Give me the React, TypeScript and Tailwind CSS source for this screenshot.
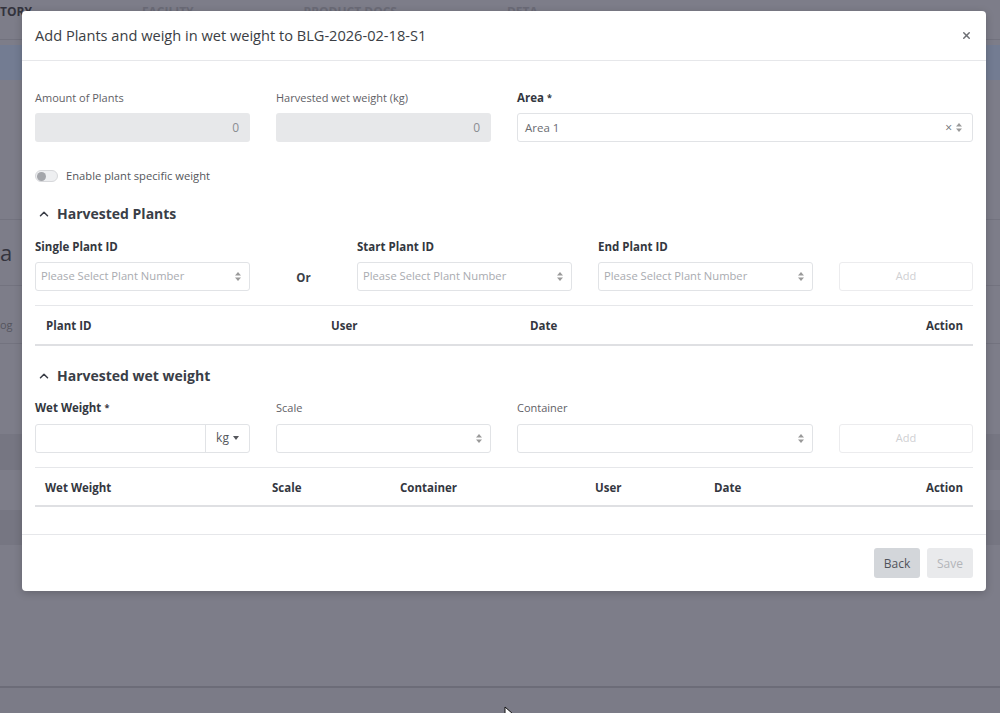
import { ChevronUp, X } from 'lucide-react'

function UpDown() {
    return (
        <svg width="6" height="9" viewBox="0 0 6 9" className="shrink-0">
            <path d="M3 0 L6 3.5 L0 3.5 Z" fill="#9a9a9a" />
            <path d="M3 9 L6 5.5 L0 5.5 Z" fill="#9a9a9a" />
        </svg>
    )
}

function Label({ children, bold, req }: { children: React.ReactNode; bold?: boolean; req?: boolean }) {
    return (
        <div className={`h-[16px] leading-[16px] ${bold ? 'text-[11.5px] font-bold text-[#333740]' : 'text-[11px] text-[#5f6166]'}`}>
            {children}
            {req && <span className="ml-[3px] text-[9px] align-top">*</span>}
        </div>
    )
}

function SelectBox({ placeholder, className = '' }: { placeholder?: string; className?: string }) {
    return (
        <div className={`flex h-[29px] items-center justify-between rounded-[3px] border border-[#e1e3e6] bg-white pl-[5px] pr-[8px] ${className}`}>
            <span className="text-[11.2px] text-[#a9abb0]">{placeholder}</span>
            <UpDown />
        </div>
    )
}

function AddButton() {
    return (
        <div className="flex h-[29px] items-center justify-center rounded-[3px] border border-[#ececee] bg-white text-[11px] text-[#cfd0d3]">
            Add
        </div>
    )
}

function Section({ title }: { title: string }) {
    return (
        <div className="flex h-[20px] items-center gap-[6px] text-[#3a3e47]">
            <ChevronUp size={14} strokeWidth={2.6} className="ml-[2px]" />
            <span className="text-[14px] font-bold leading-[20px]">{title}</span>
        </div>
    )
}

export default function App() {
    return (
        <div className="relative h-[713px] w-[1000px] overflow-hidden bg-[#7d7d89] font-['Open_Sans',sans-serif]">

            {/* Page behind the dialog */}
            <div className="flex flex-col">
                <nav className="flex h-[40px] items-start gap-[110px] border-b border-[#72727e] pt-[3px] text-[12px] font-bold uppercase">
                    <span className="text-[#33333d]">Tory</span>
                    <span className="text-[#6b6b77]">Facility</span>
                    <span className="text-[#6b6b77]">Product Docs</span>
                    <span className="text-[#6b6b77]">Deta</span>
                </nav>
                <div className="mt-[5px] h-[35px] bg-[#737c92]" />
                <div className="h-[140px] border-b border-[#73737f]" />
                <div className="flex h-[66px] items-center border-b border-[#73737f] text-[22px] text-[#34343e]">a</div>
                <div className="h-[58px] border-b border-[#73737f] pt-[33px] text-[11px] leading-[12px] text-[#55555f]">og</div>
                <div className="h-[91px] border-b border-[#767682]" />
                <div className="h-[35px] bg-[#767682]" />
                <div className="h-[40px]" />
                <div className="h-[35px] bg-[#767682]" />
                <div className="h-[143px] border-b-2 border-[#6c6c78]" />
                <div className="h-[25px] bg-[#7b7b87]" />
            </div>

            {/* Mouse cursor */}
            <svg width="10" height="14" viewBox="0 0 10 14" className="absolute left-[504px] top-[706px]">
                <path d="M1 1 L1 12 L4 9 L6 13 L8 12 L6 8 L9 8 Z" fill="#fff" stroke="#111" strokeWidth="1" />
            </svg>

            {/* Dialog */}
            <div className="absolute inset-0 pl-[22px] pt-[11px]">
                <div className="flex h-[580px] w-[964px] flex-col rounded-[4px] bg-white shadow-[0_2px_8px_rgba(0,0,0,0.2)]">

                    {/* Header */}
                    <div className="flex h-[50px] shrink-0 items-center justify-between border-b border-[#e6e7ea] pl-[13px] pr-[14px]">
                        <h2 className="text-[14.6px] text-[#3b3e44]">Add Plants and weigh in wet weight to BLG-2026-02-18-S1</h2>
                        <X size={11} strokeWidth={3.2} className="text-[#6d6f74]" />
                    </div>

                    {/* Body */}
                    <div className="flex flex-1 flex-col px-[13px] pt-[29px]">

                        <div className="grid grid-cols-[215px_215px_1fr] gap-x-[26px]">
                            <div>
                                <Label>Amount of Plants</Label>
                                <div className="mt-[7px] flex h-[29px] items-center justify-end rounded-[3px] bg-[#e7e8ea] pr-[11px] text-[12px] text-[#8b8d92]">0</div>
                            </div>
                            <div>
                                <Label>Harvested wet weight (kg)</Label>
                                <div className="mt-[7px] flex h-[29px] items-center justify-end rounded-[3px] bg-[#e7e8ea] pr-[11px] text-[12px] text-[#8b8d92]">0</div>
                            </div>
                            <div>
                                <Label bold req>Area</Label>
                                <div className="mt-[7px] flex h-[29px] items-center justify-between rounded-[3px] border border-[#e1e3e6] bg-white pl-[7px] pr-[10px]">
                                    <span className="text-[11.5px] text-[#6a6c71]">Area 1</span>
                                    <div className="flex items-center gap-[4px]">
                                        <span className="text-[12px] leading-none text-[#6d6f74]">×</span>
                                        <UpDown />
                                    </div>
                                </div>
                            </div>
                        </div>

                        {/* Toggle */}
                        <div className="mt-[28px] flex h-[12px] items-center gap-[8px]">
                            <div className="flex h-[12px] w-[23px] items-center rounded-full border border-[#d7d8db] bg-[#eeeff1] px-[1px]">
                                <div className="h-[9px] w-[9px] rounded-full bg-[#a4a6ab]" />
                            </div>
                            <span className="text-[11.2px] text-[#55575c]">Enable plant specific weight</span>
                        </div>

                        {/* Harvested Plants */}
                        <div className="mt-[22px]">
                            <Section title="Harvested Plants" />
                        </div>

                        <div className="mt-[15px] grid grid-cols-[215px_107px_215px_215px_1fr]">
                            <div>
                                <Label bold>Single Plant ID</Label>
                                <SelectBox className="mt-[7px]" placeholder="Please Select Plant Number" />
                            </div>
                            <div className="flex items-end justify-center pb-[5px]">
                                <span className="text-[11.5px] font-bold text-[#3a3e47]">Or</span>
                            </div>
                            <div>
                                <Label bold>Start Plant ID</Label>
                                <SelectBox className="mt-[7px]" placeholder="Please Select Plant Number" />
                            </div>
                            <div className="ml-[26px] w-[215px]">
                                <Label bold>End Plant ID</Label>
                                <SelectBox className="mt-[7px]" placeholder="Please Select Plant Number" />
                            </div>
                            <div className="ml-[52px]">
                                <div className="h-[16px]" />
                                <div className="mt-[7px]"><AddButton /></div>
                            </div>
                        </div>

                        <table className="mt-[14px] w-full table-fixed border-t border-[#e6e7ea] text-[11.5px] text-[#34373f]">
                            <colgroup>
                                <col className="w-[296px]" />
                                <col className="w-[199px]" />
                                <col />
                                <col className="w-[120px]" />
                            </colgroup>
                            <thead>
                                <tr className="h-[39px] border-b-2 border-[#dfe0e3]">
                                    <th className="pl-[11px] pt-[2px] text-left font-bold">Plant ID</th>
                                    <th className="pt-[2px] text-left font-bold">User</th>
                                    <th className="pt-[2px] text-left font-bold">Date</th>
                                    <th className="pr-[10px] pt-[2px] text-right font-bold">Action</th>
                                </tr>
                            </thead>
                        </table>

                        {/* Harvested wet weight */}
                        <div className="mt-[20px]">
                            <Section title="Harvested wet weight" />
                        </div>

                        <div className="mt-[14px] grid grid-cols-[215px_215px_296px_1fr] gap-x-[26px]">
                            <div>
                                <Label bold req>Wet Weight</Label>
                                <div className="mt-[8px] flex h-[29px] rounded-[3px] border border-[#e1e3e6] bg-white">
                                    <div className="flex-1" />
                                    <div className="flex w-[44px] items-center justify-center gap-[4px] border-l border-[#e1e3e6] text-[12px] text-[#55575c]">
                                        kg
                                        <svg width="6" height="4" viewBox="0 0 6 4"><path d="M0 0 L6 0 L3 4 Z" fill="#55575c" /></svg>
                                    </div>
                                </div>
                            </div>
                            <div>
                                <Label>Scale</Label>
                                <SelectBox className="mt-[8px]" />
                            </div>
                            <div>
                                <Label>Container</Label>
                                <SelectBox className="mt-[8px]" />
                            </div>
                            <div>
                                <div className="h-[16px]" />
                                <div className="mt-[8px]"><AddButton /></div>
                            </div>
                        </div>

                        <table className="mt-[14px] w-full table-fixed border-t border-[#e6e7ea] text-[11.5px] text-[#34373f]">
                            <colgroup>
                                <col className="w-[237px]" />
                                <col className="w-[128px]" />
                                <col className="w-[195px]" />
                                <col className="w-[119px]" />
                                <col />
                                <col className="w-[120px]" />
                            </colgroup>
                            <thead>
                                <tr className="h-[39px] border-b-2 border-[#dfe0e3]">
                                    <th className="pl-[10px] pt-[2px] text-left font-bold">Wet Weight</th>
                                    <th className="pt-[2px] text-left font-bold">Scale</th>
                                    <th className="pt-[2px] text-left font-bold">Container</th>
                                    <th className="pt-[2px] text-left font-bold">User</th>
                                    <th className="pt-[2px] text-left font-bold">Date</th>
                                    <th className="pr-[10px] pt-[2px] text-right font-bold">Action</th>
                                </tr>
                            </thead>
                        </table>
                    </div>

                    {/* Footer */}
                    <div className="flex h-[57px] shrink-0 items-center justify-end gap-[7px] border-t border-[#e6e7ea] px-[13px]">
                        <button className="flex h-[30px] w-[46px] items-center justify-center rounded-[3px] bg-[#d3d6da] pt-[2px] text-[12px] text-[#50535a]">Back</button>
                        <button className="flex h-[30px] w-[46px] items-center justify-center rounded-[3px] bg-[#e9eaec] pt-[2px] text-[12px] text-[#b3b5b9]">Save</button>
                    </div>
                </div>
            </div>
        </div>
    )
}
